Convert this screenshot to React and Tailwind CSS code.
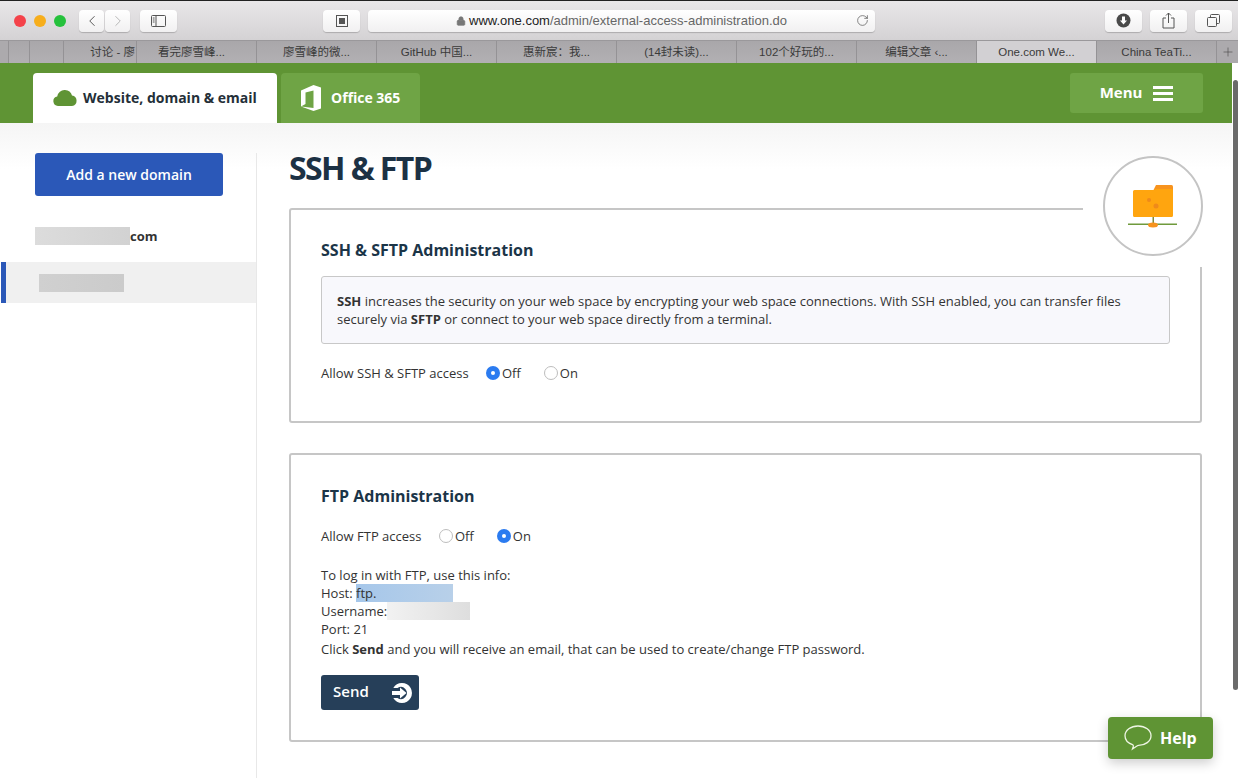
import React from 'react';
import { ChevronLeft, ChevronRight, Lock, RotateCw, Plus } from 'lucide-react';

const tabs = [
  { label: '', w: 'w-[21px]' },
  { label: '', w: 'w-[34px]' },
  { label: '讨论 - 廖', w: 'w-[73px]', right: true },
  { label: '看完廖雪峰...', w: 'w-[120px]', shift: 'pr-[10px]' },
  { label: '廖雪峰的微...', w: 'w-[120px]' },
  { label: 'GitHub 中国...', w: 'w-[120px]' },
  { label: '惠新宸：我...', w: 'w-[120px]' },
  { label: '(14封未读)...', w: 'w-[120px]' },
  { label: '102个好玩的...', w: 'w-[120px]' },
  { label: '编辑文章 ‹...', w: 'w-[120px]' },
  { label: 'One.com We...', w: 'w-[120px]', active: true },
  { label: 'China TeaTi...', w: 'w-[120px]' },
];

const ToolButton = ({ className, children }) => (
  <div className={`h-[22px] bg-gradient-to-b from-white to-[#f1f0f1] rounded-[4px] shadow-[0_1px_1px_rgba(0,0,0,0.2)] flex items-center justify-center ${className}`}>
    {children}
  </div>
);

const Radio = ({ checked }) =>
  checked ? (
    <span className="w-[14px] h-[14px] rounded-full bg-[#2b7bf0] flex items-center justify-center">
      <span className="w-[4px] h-[4px] rounded-full bg-white" />
    </span>
  ) : (
    <span className="w-[14px] h-[14px] rounded-full bg-white border border-[#bdbdbd]" />
  );

const RadioOption = ({ checked, label }) => (
  <span className="flex items-center gap-[2px]">
    <Radio checked={checked} />
    <span className="pt-[2px]">{label}</span>
  </span>
);

const BrowserChrome = () => (
  <div className="shrink-0">
    <div className="h-[40px] border-t border-[#222] bg-gradient-to-b from-[#e9e7e9] to-[#d4d2d4] flex items-center pl-[14px]">
      <div className="flex gap-[8px] w-[65px]">
        <span className="w-[12px] h-[12px] rounded-full bg-[#f4424a]" />
        <span className="w-[12px] h-[12px] rounded-full bg-[#f7ae1c]" />
        <span className="w-[12px] h-[12px] rounded-full bg-[#25c13c]" />
      </div>
      <div className="flex gap-[1px]">
        <ToolButton className="w-[25px]"><ChevronLeft size={18} strokeWidth={1.3} className="text-[#555]" /></ToolButton>
        <ToolButton className="w-[25px]"><ChevronRight size={18} strokeWidth={1.3} className="text-[#b5b5b5]" /></ToolButton>
      </div>
      <ToolButton className="w-[37px] ml-[10px]">
        <svg width="15" height="12" viewBox="0 0 15 12" fill="none" stroke="#555" strokeWidth="1">
          <rect x="0.5" y="0.5" width="14" height="11" rx="1" />
          <path d="M5 0.5v11M1.8 3h1.8M1.8 5h1.8M1.8 7h1.8" />
        </svg>
      </ToolButton>
      <ToolButton className="w-[37px] ml-[146px]">
        <svg width="12" height="12" viewBox="0 0 12 12" fill="none">
          <rect x="0.5" y="0.5" width="11" height="11" stroke="#555" />
          <rect x="3" y="3" width="6" height="6" fill="#555" />
        </svg>
      </ToolButton>
      <ToolButton className="w-[507px] ml-[8px] relative text-[13px] font-['Liberation_Sans',sans-serif]">
        <Lock size={10} fill="#777" className="text-[#777] mr-[3px]" />
        <span className="text-[#222]">www.one.com</span>
        <span className="text-[#666]">/admin/external-access-administration.do</span>
        <RotateCw size={13} strokeWidth={1.3} className="absolute right-[6px] top-[4px] text-[#555]" />
      </ToolButton>
      <ToolButton className="w-[37px] ml-[230px]">
        <svg width="15" height="15" viewBox="0 0 15 15">
          <circle cx="7.5" cy="7.5" r="7" fill="#4a4a4a" />
          <path d="M6 3.5h3v4h2L7.5 11.5 4 7.5h2z" fill="#fff" />
        </svg>
      </ToolButton>
      <ToolButton className="w-[37px] ml-[8px]">
        <svg width="13" height="17" viewBox="0 0 13 17" fill="none" stroke="#555" strokeWidth="1">
          <path d="M4 6H1v10h11V6H9M6.500 11V1M4 3.500 6.500 1 9 3.500" />
        </svg>
      </ToolButton>
      <ToolButton className="w-[37px] ml-[8px]">
        <svg width="13" height="13" viewBox="0 0 13 13" fill="none" stroke="#555" strokeWidth="1">
          <rect x="0.500" y="3.500" width="9" height="9" rx="1" />
          <path d="M3.500 3.500V1.500a1 1 0 0 1 1-1h7a1 1 0 0 1 1 1v7a1 1 0 0 1-1 1h-2" />
        </svg>
      </ToolButton>
    </div>
    <div className="h-[23px] flex pl-[8px] bg-[#acaaad] border-t border-[#9a989b] text-[11.500px] text-[#3a3a3a] font-['Liberation_Sans','Noto_Sans_CJK_SC',sans-serif]">
      {tabs.map((t, i) => (
        <div
          key={i}
          className={`${t.w} shrink-0 border-l border-[#949295] flex items-center pt-[2px] ${t.right ? 'justify-end pr-[1px]' : 'justify-center'} ${t.shift || ''} ${t.active ? 'bg-[#d2d0d3]' : 'bg-gradient-to-b from-[#a9a7aa] to-[#b2b0b3]'}`}
        >
          {t.label}
        </div>
      ))}
      <div className="flex-1 border-l border-[#949295] flex items-center pl-[4px]">
        <Plus size={14} strokeWidth={1} className="text-[#444]" />
      </div>
    </div>
  </div>
);

const TopNav = () => (
  <div className="h-[60px] shrink-0 bg-[#5f9434] flex items-end pl-[33px] pr-[35px] font-bold">
    <div className="w-[244px] h-[50px] bg-white rounded-t-[4px] flex items-center pl-[20px] gap-[6px] text-[14px] text-[#242f38]">
      <svg width="24" height="16" viewBox="0 0 24 16" fill="#5f9434">
        <path d="M5 16a4.800 4.800 0 0 1-.8-9.500A7.600 7.600 0 0 1 12 0a7.400 7.400 0 0 1 7 5.500A5.300 5.300 0 0 1 19 16z" />
      </svg>
      <span className="pb-[2px]">Website, domain &amp; email</span>
    </div>
    <div className="w-[139px] h-[50px] ml-[4px] bg-[#6fa445] rounded-t-[4px] flex items-center pl-[20px] gap-[10px] text-[14px] text-white">
      <svg width="20" height="26" viewBox="0 0 20 26" fill="#fff">
        <path d="M0 5.500 12.500 0 20 2.500v21L12.500 26 0 21.500l12.500 1.500V5.500L4.500 7.500v11.500L0 21.500z" />
      </svg>
      <span className="pb-[2px]">Office 365</span>
    </div>
    <div className="ml-auto mb-[10px] w-[133px] h-[40px] bg-[#6fa445] rounded-[3px] flex items-center justify-center gap-[11px] text-[15px] text-white">
      <span className="pb-[2px]">Menu</span>
      <span className="flex flex-col gap-[3px]">
        <span className="w-[20px] h-[3px] bg-white" />
        <span className="w-[20px] h-[3px] bg-white" />
        <span className="w-[20px] h-[3px] bg-white" />
      </span>
    </div>
  </div>
);

const Sidebar = () => (
  <div className="w-[257px] shrink-0 mt-[30px] border-r border-[#e8e8e8] pl-[1px]">
    <button className="ml-[34px] w-[188px] h-[43px] bg-[#2b58b8] rounded-[3px] text-white text-[14px] font-semibold">
      Add a new domain
    </button>
    <div className="ml-[34px] mt-[31px] h-[18px] flex items-center text-[13px] font-bold text-[#333]">
      <span className="w-[95px] h-[18px] bg-gradient-to-r from-[#dcdcdc] to-[#d2d2d2]" />
      <span className="pt-[2px]">com</span>
    </div>
    <div className="mt-[17px] h-[41px] bg-[#f0f0f0] border-l-[5px] border-[#2b58b8] flex items-center pl-[33px]">
      <span className="w-[85px] h-[18px] bg-gradient-to-r from-[#d0d0d0] to-[#cbcbcb]" />
    </div>
  </div>
);

const Card = ({ title, className, children }) => (
  <div className={`border-2 border-[#c6c6c6] rounded-[3px] bg-white pl-[30px] pr-[30px] ${className}`}>
    <h2 className="text-[16px] leading-[22px] font-bold text-[#1b3548]">{title}</h2>
    {children}
  </div>
);

const Content = () => (
  <div className="flex-1 pl-[32px] pr-[36px] relative text-[13px] text-[#333]">
    <h1 className="mt-[23px] h-[44px] text-[32px] leading-[44px] font-bold tracking-[-1.600px] text-[#1c3144]">SSH &amp; FTP</h1>

    <Card title="SSH & SFTP Administration" className="mt-[18px] h-[215px] pt-[29px]">
      <div className="mt-[15px] h-[68px] border border-[#c8c8c8] rounded-[3px] bg-[#f8f8fc] pl-[15px] pt-[15px] leading-[18px]">
        <p><b>SSH</b> increases the security on your web space by encrypting your web space connections. With SSH enabled, you can transfer files</p>
        <p>securely via <b>SFTP</b> or connect to your web space directly from a terminal.</p>
      </div>
      <div className="mt-[20px] flex items-center h-[18px]">
        <span className="w-[165px] pt-[2px]">Allow SSH &amp; SFTP access</span>
        <RadioOption checked label="Off" />
        <span className="ml-[23px]"><RadioOption label="On" /></span>
      </div>
    </Card>

    <Card title="FTP Administration" className="mt-[30px] h-[289px] pt-[30px]">
      <div className="mt-[20px] flex items-center h-[18px]">
        <span className="w-[118px] pt-[2px]">Allow FTP access</span>
        <RadioOption label="Off" />
        <span className="ml-[23px]"><RadioOption checked label="On" /></span>
      </div>
      <div className="mt-[21px] leading-[18px]">
        <p>To log in with FTP, use this info:</p>
        <p className="flex">Host:&nbsp;<span className="w-[97px] bg-gradient-to-r from-[#a6c7ea] to-[#b8d0e9]">ftp.</span></p>
        <p className="flex">Username:<span className="w-[83px] bg-gradient-to-r from-[#f2f2f2] to-[#dedede]" /></p>
        <p>Port: 21</p>
        <p className="mt-[2px]">Click <b>Send</b> and you will receive an email, that can be used to create/change FTP password.</p>
      </div>
      <button className="mt-[17px] w-[98px] h-[35px] bg-[#263f59] rounded-[3px] text-white text-[15px] font-semibold flex items-center justify-between pl-[12px] pr-[7px]">
        <span className="pb-[2px]">Send</span>
        <svg width="20" height="20" viewBox="0 0 20 20">
          <path d="M10 0a10 10 0 1 1-8.700 15h4.200A6 6 0 1 0 5.500 5H1.300A10 10 0 0 1 10 0z" fill="#fff" />
          <path d="M0 8h8V4.500L14.500 10 8 15.500V12H0z" fill="#fff" />
        </svg>
      </button>
    </Card>

    {/* white patch breaks the card border behind the badge */}
    <div className="absolute left-[826px] top-[84px] w-[130px] h-[60px] bg-white" />
    <div className="absolute left-[846px] top-[33px] w-[100px] h-[100px] rounded-full border-2 border-[#c4c4c4] bg-white flex items-center justify-center">
      <svg width="50" height="44" viewBox="0 0 50 44">
        <path d="M28 1h15.500A1.500 1.500 0 0 1 45 2.500V7H25z" fill="#f7931e" />
        <path d="M6.500 6H26l2-1h15.500A1.500 1.500 0 0 1 45 6.500V31.500a1.500 1.500 0 0 1-1.500 1.500H6.500A1.500 1.500 0 0 1 5 31.500v-24A1.500 1.500 0 0 1 6.500 6z" fill="#ffa50f" />
        <rect x="24.500" y="33" width="1.500" height="7" fill="#7f8a3c" />
        <rect x="0" y="39.500" width="49" height="1.500" fill="#6f9a3c" />
        <ellipse cx="25" cy="41" rx="5" ry="2.500" fill="#f7931e" />
        <circle cx="21" cy="16" r="2" fill="#ef8a1a" />
        <circle cx="28" cy="22" r="2.500" fill="#ef8a1a" />
      </svg>
    </div>
  </div>
);

export default function App() {
  return (
    <div className="w-[1238px] h-[778px] relative overflow-hidden flex flex-col bg-white font-['Open_Sans',sans-serif]">
      <BrowserChrome />
      <TopNav />
      <div className="flex-1 flex bg-gradient-to-b from-[#f5f5f5] via-white via-[7%] to-white">
        <Sidebar />
        <Content />
      </div>

      {/* overlay scrollbar */}
      <div className="absolute right-0 top-[63px] w-[6px] h-[715px] bg-white">
        <div className="absolute left-[1px] top-[17px] w-[5px] h-[610px] bg-[#6a6a6a] rounded-[3px]" />
      </div>

      <div className="absolute left-[1108px] top-[717px] w-[105px] h-[42px] bg-[#5f9434] rounded-[4px] shadow-[0_4px_12px_rgba(0,0,0,0.2)] flex items-center pl-[16px] gap-[8px] text-[16px] font-bold text-white">
        <svg width="28" height="26" viewBox="0 0 28 26" fill="none" stroke="#eef5e4" strokeWidth="1.300">
          <path d="M14 1C6.800 1 1 5.300 1 10.800c0 4 3.200 7.400 7.500 8.900.8.300 1 .9.800 1.700l-.8 2.600 4.800-3.300c.4-.3.700-.3 1.200-.3C21.200 20.400 27 16.200 27 10.800 27 5.300 21.200 1 14 1z" />
        </svg>
        Help
      </div>
    </div>
  );
}
